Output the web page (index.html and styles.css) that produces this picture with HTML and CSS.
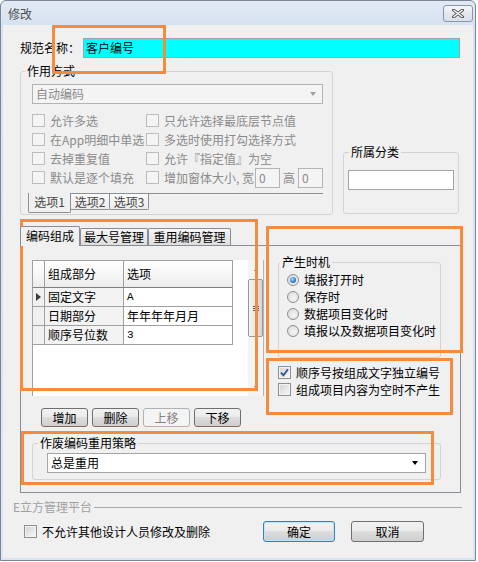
FILE: index.html
```html
<!DOCTYPE html>
<html lang="zh-CN">
<head>
    <meta charset="UTF-8">
    <meta name="viewport" content="width=device-width, initial-scale=1.0">
    <title>修改</title>
    <link rel="stylesheet" href="styles.css">
</head>
<body>
<div class="window">
    <div class="titlebar">
        <span class="title">修改</span>
        <span class="close-btn">
            <svg width="12" height="9" viewBox="0 0 12 9">
                <path d="M1.5 1 L10.5 8 M10.5 1 L1.5 8" stroke="#5e5e5e" stroke-width="3.2" stroke-linecap="square" fill="none"/>
                <path d="M1.5 1 L10.5 8 M10.5 1 L1.5 8" stroke="#fff" stroke-width="1.2" fill="none"/>
            </svg>
        </span>
    </div>

    <div class="client">
        <div class="name-row">
            <label>规范名称：</label>
            <div class="textbox cyan">客户编号</div>
        </div>

        <div class="top-row">
            <fieldset class="group mode">
                <legend>作用方式</legend>
                <div class="body">
                    <div class="combo disabled"><span>自动编码</span><i class="arrow"></i></div>
                    <div class="opts">
                        <div class="check disabled"><span class="box"></span>允许多选</div>
                        <div class="check disabled"><span class="box"></span>只允许选择最底层节点值</div>
                        <div class="check disabled"><span class="box"></span>在App明细中单选</div>
                        <div class="check disabled"><span class="box"></span>多选时使用打勾选择方式</div>
                        <div class="check disabled"><span class="box"></span>去掉重复值</div>
                        <div class="check disabled"><span class="box"></span>允许『指定值』为空</div>
                        <div class="check disabled"><span class="box"></span>默认是逐个填充</div>
                        <div class="check disabled"><span class="box"></span>增加窗体大小,&nbsp;宽<span class="mini">0</span><span class="mini-label">高</span><span class="mini">0</span></div>
                    </div>
                    <div class="opt-tabs">
                        <span class="opt-tab active">选项1</span>
                        <span class="opt-tab">选项2</span>
                        <span class="opt-tab">选项3</span>
                    </div>
                </div>
            </fieldset>

            <fieldset class="group category">
                <legend>所属分类</legend>
                <div class="body">
                    <div class="textbox white"></div>
                </div>
            </fieldset>
        </div>

        <div class="tabstrip">
            <span class="tab active t1">编码组成</span>
            <span class="tab t2">最大号管理</span>
            <span class="tab t3">重用编码管理</span>
        </div>
        <div class="tabpanel">
            <div class="panel-top">
                <div class="left-col">
                    <div class="datagrid">
                        <div class="dg-table">
                            <div class="dg-row head">
                                <span class="rh"></span><span>组成部分</span><span>选项</span>
                            </div>
                            <div class="dg-row">
                                <span class="rh"><i class="cur"></i></span><span class="c1">固定文字</span><span class="mono">A</span>
                            </div>
                            <div class="dg-row">
                                <span class="rh"></span><span class="c1">日期部分</span><span>年年年年月月</span>
                            </div>
                            <div class="dg-row">
                                <span class="rh"></span><span class="c1">顺序号位数</span><span class="mono">3</span>
                            </div>
                        </div>
                        <div class="vscroll">
                            <div class="sb-arrow"><i class="up"></i></div>
                            <div class="sb-thumb"><i></i><i></i><i></i></div>
                            <div class="sb-arrow bottom"><i class="down"></i></div>
                        </div>
                    </div>
                    <div class="btn-row">
                        <span class="btn">增加</span>
                        <span class="btn">删除</span>
                        <span class="btn disabled">上移</span>
                        <span class="btn">下移</span>
                    </div>
                </div>

                <div class="right-col">
                    <fieldset class="group timing">
                        <legend>产生时机</legend>
                        <div class="body">
                            <div class="radio"><span class="dot on"></span>填报打开时</div>
                            <div class="radio"><span class="dot"></span>保存时</div>
                            <div class="radio"><span class="dot"></span>数据项目变化时</div>
                            <div class="radio"><span class="dot"></span>填报以及数据项目变化时</div>
                        </div>
                    </fieldset>
                    <div class="checks">
                        <div class="check"><span class="box">
                            <svg width="9" height="9" viewBox="0 0 9 9"><path d="M1 4.6 L3.4 7.3 L8 1.2" stroke="#2f4f9a" stroke-width="1.8" fill="none"/></svg>
                        </span>顺序号按组成文字独立编号</div>
                        <div class="check"><span class="box"></span>组成项目内容为空时不产生</div>
                    </div>
                </div>
            </div>

            <fieldset class="group reuse">
                <legend>作废编码重用策略</legend>
                <div class="body">
                    <div class="combo"><span>总是重用</span><i class="arrow"></i></div>
                </div>
            </fieldset>
        </div>

        <div class="sep-row"><span>E立方管理平台</span><i></i></div>

        <div class="footer">
            <div class="check"><span class="box"></span>不允许其他设计人员修改及删除</div>
            <span class="btn wide focus">确定</span>
            <span class="btn wide">取消</span>
        </div>
    </div>
</div>

<!-- annotation boxes drawn over the dialog -->
<div class="mark m1"></div>
<div class="mark m2"></div>
<div class="mark m3"></div>
<div class="mark m4"></div>
<div class="mark m5"></div>
</body>
</html>
```

FILE: styles.css
```css
* {
    box-sizing: border-box;
}
body {
    margin: 0;
    background: #fff;
    font-family: "Noto Sans CJK SC", "Liberation Sans", sans-serif;
    font-size: 12px;
    line-height: 14px;
    color: #000;
}

/* window frame */
.window {
    width: 476px;
    height: 561px;
    border: 1px solid #7b8594;
    border-radius: 6px 6px 0 0;
    background: linear-gradient(#e2eaf5, #d6e2f1 24px, #dae5f2);
    padding: 0 2px 2px;
    display: flex;
    flex-direction: column;
}
.titlebar {
    height: 24px;
    display: flex;
    justify-content: space-between;
    align-items: flex-start;
    padding-left: 5px;
}
.title {
    margin-top: 6px;
    color: #4f4f4f;
}
.close-btn {
    width: 30px;
    height: 17px;
    margin-top: 4px;
    border: 1px solid #8b96a5;
    border-radius: 3px;
    background: linear-gradient(#f5f7fa, #e3e8ef 50%, #d9e0ea);
    display: flex;
    align-items: center;
    justify-content: center;
}
.client {
    flex: 1;
    background: #f0f0f0;
}

/* text boxes and combos */
.name-row {
    display: flex;
    align-items: center;
    margin: 13px 0 0 17px;
    height: 20px;
}
.name-row label {
    width: 63px;
}
.textbox {
    height: 20px;
    border: 1px solid #a3a3a3;
    padding-left: 2px;
    line-height: 18px;
}
.textbox.cyan {
    width: 377px;
    background: #00ffff;
}
.textbox.white {
    width: 106px;
    background: #fff;
}
.combo {
    height: 20px;
    border: 1px solid #a5a5a5;
    background: #fff;
    display: flex;
    align-items: center;
    justify-content: space-between;
    padding: 0 7px 0 3px;
}
.combo .arrow {
    width: 0;
    height: 0;
    border-left: 3.5px solid transparent;
    border-right: 3.5px solid transparent;
    border-top: 4px solid #000;
}
.combo.disabled {
    width: 291px;
    background: #f4f4f4;
    border-color: #b3b3b3;
    color: #8b8b8b;
    padding-right: 6px;
}
.combo.disabled .arrow {
    border-top-color: #a0a0a0;
}

/* group boxes */
.group {
    margin: 0;
    padding: 0;
    min-width: 0;
    border: 1px solid #d3d3d3;
    border-radius: 3px;
}
.group legend {
    padding: 0 2px;
    height: 14px;
    line-height: 14px;
}
.top-row {
    display: flex;
    align-items: flex-start;
    margin: 6px 0 0 17px;
}
.mode {
    width: 313px;
    height: 151px;
}
.mode legend {
    margin-left: 4px;
}
.mode .body {
    padding: 6px 0 0 11px;
}
.category {
    width: 116px;
    height: 69px;
    margin: 81px 0 0 10px;
}
.category legend {
    margin-left: 5px;
}
.category .body {
    padding: 11px 0 0 4px;
}

/* checkboxes */
.opts {
    display: grid;
    grid-template-columns: 114px 1fr;
    grid-auto-rows: 19px;
    margin-top: 7px;
}
.check {
    display: flex;
    align-items: center;
    white-space: nowrap;
}
.box {
    width: 13px;
    height: 13px;
    flex: none;
    margin-right: 5px;
    border: 1px solid #8e8f8f;
    background: linear-gradient(135deg, #d2d2d2, #fafafa);
    box-shadow: inset 0 0 0 1px #f4f4f4;
    display: flex;
    align-items: center;
    justify-content: center;
}
.check.disabled {
    color: #8b8b8b;
}
.check.disabled .box {
    border-color: #bdbdbd;
    background: #f4f4f4;
    box-shadow: none;
}
.mini {
    width: 25px;
    height: 20px;
    margin-left: 1px;
    border: 1px solid #b4b4b4;
    background: #f4f4f4;
    padding-left: 3px;
    line-height: 18px;
}
.mini-label {
    margin: 0 2px 0 3px;
}
.opt-tabs {
    display: flex;
    align-items: flex-start;
    width: 295px;
    margin: 6px 0 0 -4px;
    border-top: 1px solid #8e9096;
}
.opt-tab {
    width: 40px;
    height: 16px;
    border: 1px solid #8e9096;
    border-top: none;
    border-radius: 0 0 2px 2px;
    background: linear-gradient(#fafafa, #ececec);
    color: #444;
    text-align: center;
    line-height: 15px;
}
.opt-tab.active {
    width: 43px;
    height: 20px;
    margin-top: -1px;
    background: #f0f0f0;
    line-height: 18px;
}
.opt-tab + .opt-tab {
    margin-left: -1px;
}

/* main tab control */
.tabstrip {
    display: flex;
    align-items: flex-end;
    height: 19px;
    margin: 11px 0 0 17px;
}
.tab {
    height: 17px;
    border: 1px solid #898c95;
    border-bottom: none;
    border-radius: 2px 2px 0 0;
    background: linear-gradient(#f6f6f6, #e9e9e9 50%, #dedede);
    text-align: center;
    line-height: 16px;
}
.tab.active {
    position: relative;
    z-index: 1;
    height: 20px;
    margin-bottom: -1px;
    background: #f0f0f0;
    line-height: 17px;
}
.t1 { width: 60px; }
.t2 { width: 68px; }
.t3 { width: 83px; }
.tabpanel {
    width: 441px;
    height: 248px;
    margin-left: 17px;
    border: 1px solid #898c95;
}
.panel-top {
    display: flex;
    align-items: flex-start;
}
.left-col {
    width: 232px;
    margin: 14px 0 0 11px;
}
.right-col {
    margin: 9px 0 0 14px;
}

/* data grid */
.datagrid {
    height: 136px;
    display: flex;
    justify-content: space-between;
    background: #fff;
    border-left: 1px solid #a0a0a0;
    border-right: 1px solid #b4b4b4;
}
.dg-table {
    width: 200px;
}
.dg-row {
    display: grid;
    grid-template-columns: 12px 79px 109px;
    height: 19px;
}
.dg-row span {
    border-right: 1px solid #a0a0a0;
    border-bottom: 1px solid #a0a0a0;
    padding-left: 3px;
    line-height: 18px;
    white-space: nowrap;
    overflow: hidden;
}
.dg-row.head {
    height: 28px;
}
.dg-row.head span {
    border-top: 1px solid #a0a0a0;
    border-bottom-color: #7f7f7f;
    background: linear-gradient(#ffffff, #f5f5f5 60%, #ebebeb);
    line-height: 26px;
}
.dg-row .rh {
    background: #f0f0f0;
    padding: 0;
    display: flex;
    align-items: center;
    justify-content: center;
}
.dg-row .c1 {
    background: #f3f3f3;
}
.dg-row .mono {
    font-family: "Liberation Mono", monospace;
    font-size: 11px;
}
.cur {
    width: 0;
    height: 0;
    border-top: 4px solid transparent;
    border-bottom: 4px solid transparent;
    border-left: 5px solid #3c3c3c;
}
.vscroll {
    width: 15px;
    display: flex;
    flex-direction: column;
    background: #f4f4f4;
}
.sb-arrow {
    height: 19px;
    display: flex;
    align-items: center;
    justify-content: center;
}
.sb-arrow.bottom {
    height: 17px;
    margin-top: auto;
}
.sb-arrow i {
    width: 0;
    height: 0;
    border-left: 2.5px solid transparent;
    border-right: 2.5px solid transparent;
}
.sb-arrow .up {
    border-bottom: 3px solid #505050;
}
.sb-arrow .down {
    border-top: 3px solid #505050;
}
.sb-thumb {
    height: 58px;
    border: 1px solid #979797;
    border-radius: 2px;
    background: linear-gradient(90deg, #f3f3f3, #e6e6e6 50%, #d4d4d4);
    display: flex;
    flex-direction: column;
    align-items: center;
    justify-content: center;
    gap: 1px;
}
.sb-thumb i {
    width: 6px;
    height: 1px;
    background: #555;
}

/* buttons */
.btn-row {
    display: flex;
    gap: 4px;
    margin: 12px 0 0 9px;
}
.btn {
    width: 47px;
    height: 19px;
    border: 1px solid #707070;
    border-radius: 3px;
    background: linear-gradient(#f2f2f2, #ebebeb 45%, #dddddd 50%, #cfcfcf);
    display: flex;
    align-items: center;
    justify-content: center;
}
.btn.disabled {
    border-color: #adb2b5;
    background: #f4f4f4;
    color: #838383;
}

/* right side of tab panel */
.timing {
    width: 163px;
    height: 103px;
}
.timing legend {
    margin-left: 1px;
}
.timing .body {
    padding: 2px 0 0 8px;
}
.radio {
    height: 17px;
    display: flex;
    align-items: center;
    white-space: nowrap;
}
.dot {
    width: 12px;
    height: 12px;
    margin-right: 5px;
    border: 1px solid #8e8f8f;
    border-radius: 50%;
    background: radial-gradient(circle at 60% 60%, #f6f6f6, #d6d6d6);
    display: flex;
    align-items: center;
    justify-content: center;
}
.dot.on::after {
    content: "";
    width: 6px;
    height: 6px;
    border-radius: 50%;
    background: radial-gradient(circle at 40% 35%, #a6e0fb, #2a78c8 60%, #174c8e);
}
.checks {
    margin-top: 6px;
}
.checks .check {
    height: 17px;
}
.reuse {
    width: 409px;
    height: 44px;
    margin: 9px 0 0 11px;
}
.reuse legend {
    margin-left: 5px;
}
.reuse .body {
    padding: 3px 0 0 14px;
}
.reuse .combo {
    width: 379px;
}

/* bottom area */
.sep-row {
    display: flex;
    align-items: center;
    height: 14px;
    margin: 7px 11px 0 10px;
    color: #a0a0a0;
}
.sep-row i {
    flex: 1;
    height: 1px;
    margin-left: 2px;
    background: #a9a9a9;
}
.footer {
    display: flex;
    align-items: center;
    height: 21px;
    margin: 7px 49px 0 21px;
}
.footer .check {
    margin-right: auto;
}
.btn.wide {
    width: 73px;
    height: 21px;
}
.btn.focus {
    width: 72px;
    margin-right: 16px;
    border-color: #3c7fb1;
    box-shadow: inset 0 0 0 1px #bde4f9;
}

/* orange annotation rectangles */
.mark {
    position: absolute;
    border: 3px solid #f68b3d;
}
.m1 { left: 52px; top: 25px; width: 114px; height: 49px; }
.m2 { left: 20px; top: 219px; width: 238px; height: 172px; }
.m3 { left: 266px; top: 226px; width: 197px; height: 127px; }
.m4 { left: 266px; top: 358px; width: 187px; height: 57px; }
.m5 { left: 21px; top: 431px; width: 413px; height: 54px; }
```
